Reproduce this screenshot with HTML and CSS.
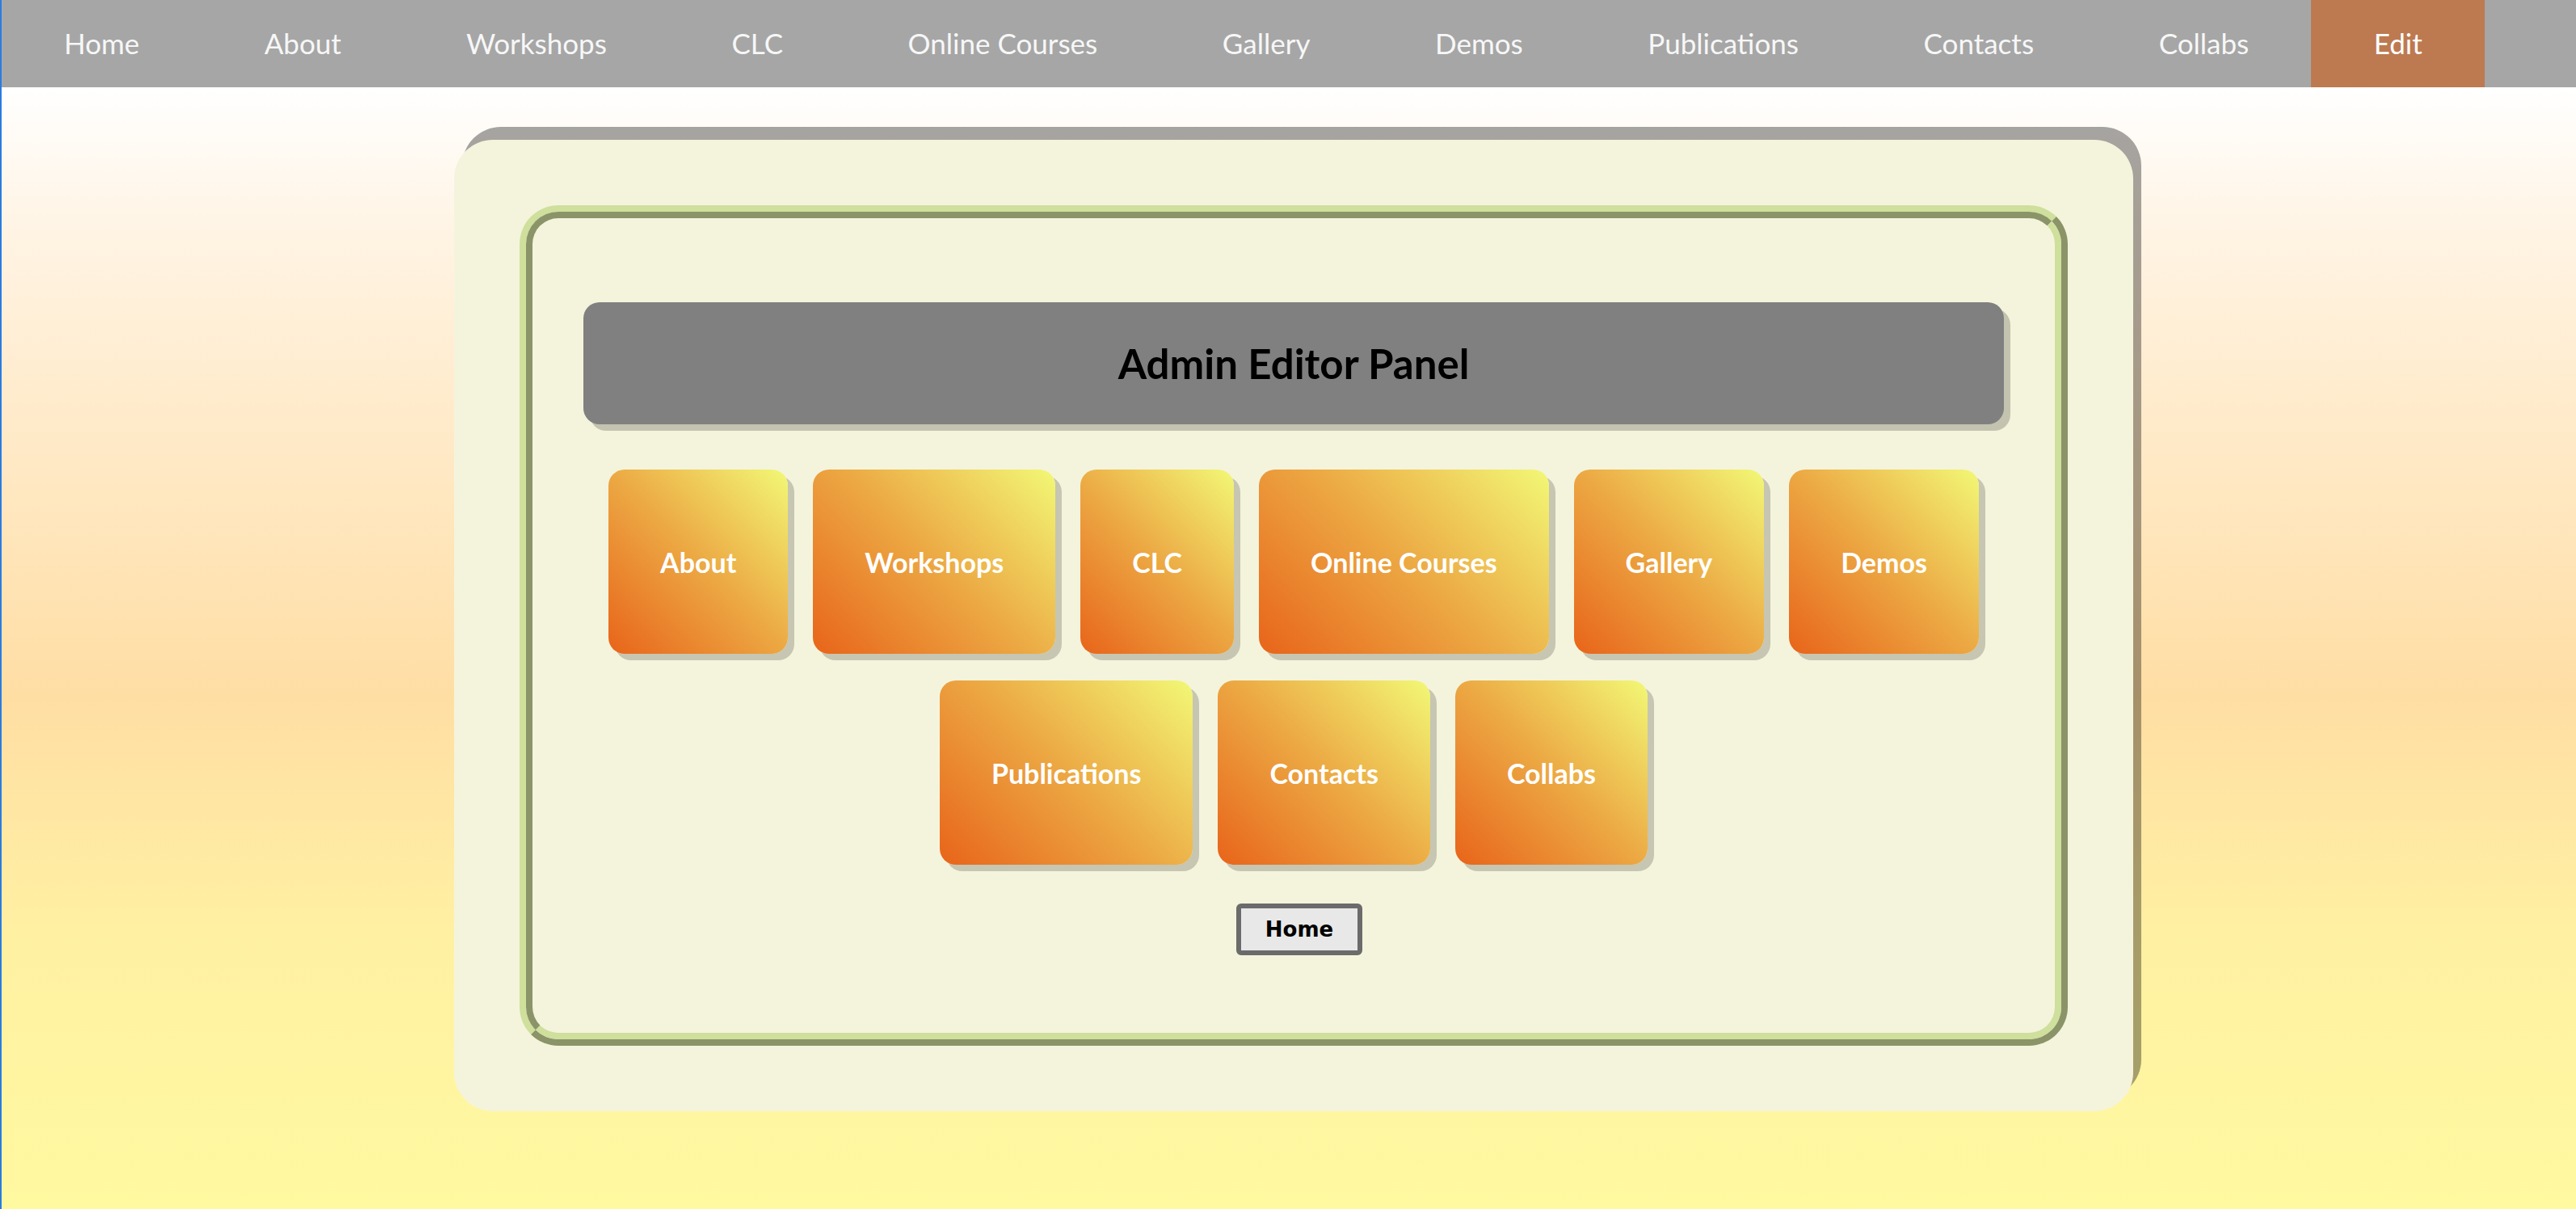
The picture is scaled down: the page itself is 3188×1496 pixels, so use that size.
FILE: index.html
```html
<!DOCTYPE html>
<html lang="en">
<head>
<meta charset="utf-8">
<title>Admin Editor Panel</title>
<link rel="stylesheet" href="styles.css">
</head>
<body>
<nav class="topnav">
  <a class="nav-link" href="#">Home</a>
  <a class="nav-link" href="#">About</a>
  <a class="nav-link" href="#">Workshops</a>
  <a class="nav-link" href="#">CLC</a>
  <a class="nav-link" href="#">Online Courses</a>
  <a class="nav-link" href="#">Gallery</a>
  <a class="nav-link" href="#">Demos</a>
  <a class="nav-link" href="#">Publications</a>
  <a class="nav-link" href="#">Contacts</a>
  <a class="nav-link" href="#">Collabs</a>
  <a class="nav-link active" href="#">Edit</a>
</nav>
<main class="card">
  <div class="frame">
    <div class="frame-inner">
      <h2 class="panel-title">Admin Editor Panel</h2>
      <div class="tiles">
        <a class="tile" href="#">About</a>
        <a class="tile" href="#">Workshops</a>
        <a class="tile" href="#">CLC</a>
        <a class="tile" href="#">Online Courses</a>
        <a class="tile" href="#">Gallery</a>
        <a class="tile" href="#">Demos</a>
        <a class="tile" href="#">Publications</a>
        <a class="tile" href="#">Contacts</a>
        <a class="tile" href="#">Collabs</a>
      </div>
      <div class="home-row">
        <button class="home-btn" type="button">Home</button>
      </div>
    </div>
  </div>
</main>
</body>
</html>
```
FILE: styles.css
```css
html, body {
  margin: 0;
  padding: 0;
}
body {
  min-height: 100vh;
  box-sizing: border-box;
  border-left: 2px solid #2b7be0;
  font-family: Lato, "Open Sans", sans-serif;
  background: linear-gradient(to bottom,
    #ffffff 0px,
    #ffffff 108px,
    #fff3e2 300px,
    #ffe6bd 640px,
    #ffdea4 860px,
    #fff0a2 1150px,
    #fff9a0 1496px);
}
.topnav {
  display: flex;
  height: 108px;
  background: #a6a6a6;
}
.nav-link {
  display: block;
  padding: 0 77.3px;
  line-height: 106px;
  font-size: 35px;
  color: #f7f7f7;
  text-decoration: none;
  white-space: nowrap;
}
.nav-link.active {
  background: #bd7a50;
  color: #ffffff;
}
.card {
  display: block;
  box-sizing: border-box;
  width: 2078px;
  margin: 65px 0 0 calc(50% - 1033px);
  padding: 81px;
  background: #f4f4dc;
  border-radius: 48px;
  box-shadow: 10px -16px 0 rgba(0, 0, 0, 0.35);
}
.frame {
  border: 8px solid;
  border-color: #cfdf9c #8b9468 #8b9468 #cfdf9c;
  border-radius: 48px;
}
.frame-inner {
  border: 8px solid;
  border-color: #8b9468 #cfdf9c #cfdf9c #8b9468;
  border-radius: 40px;
  padding: 104px 63px 96px;
}
.panel-title {
  margin: 0;
  height: 151px;
  display: flex;
  align-items: center;
  justify-content: center;
  background: #808080;
  border-radius: 20px;
  box-shadow: 8px 8px 0 rgba(0, 0, 0, 0.2);
  font-size: 51px;
  font-weight: 700;
  color: #000;
}
.tiles {
  display: flex;
  flex-wrap: wrap;
  justify-content: center;
  column-gap: 31px;
  row-gap: 33px;
  margin-top: 56px;
}
.tile {
  display: flex;
  align-items: center;
  justify-content: center;
  height: 228px;
  padding: 0 64px;
  border-radius: 20px;
  background: linear-gradient(45deg, #e8641a 0%, #eca843 50%, #f2f876 100%);
  box-shadow: 8px 8px 0 rgba(0, 0, 0, 0.19);
  color: #ffffff;
  font-size: 34px;
  font-weight: 700;
  text-decoration: none;
  white-space: nowrap;
}
.home-row {
  display: flex;
  justify-content: center;
  margin-top: 48px;
  padding-left: 14px;
}
.home-btn {
  font-family: "DejaVu Sans", sans-serif;
  font-weight: 700;
  font-size: 26px;
  color: #000;
  background: #e8e8e8;
  border: 6px solid #6b6b6b;
  border-radius: 6px;
  width: 156px;
  height: 64px;
  padding: 0;
}
```
